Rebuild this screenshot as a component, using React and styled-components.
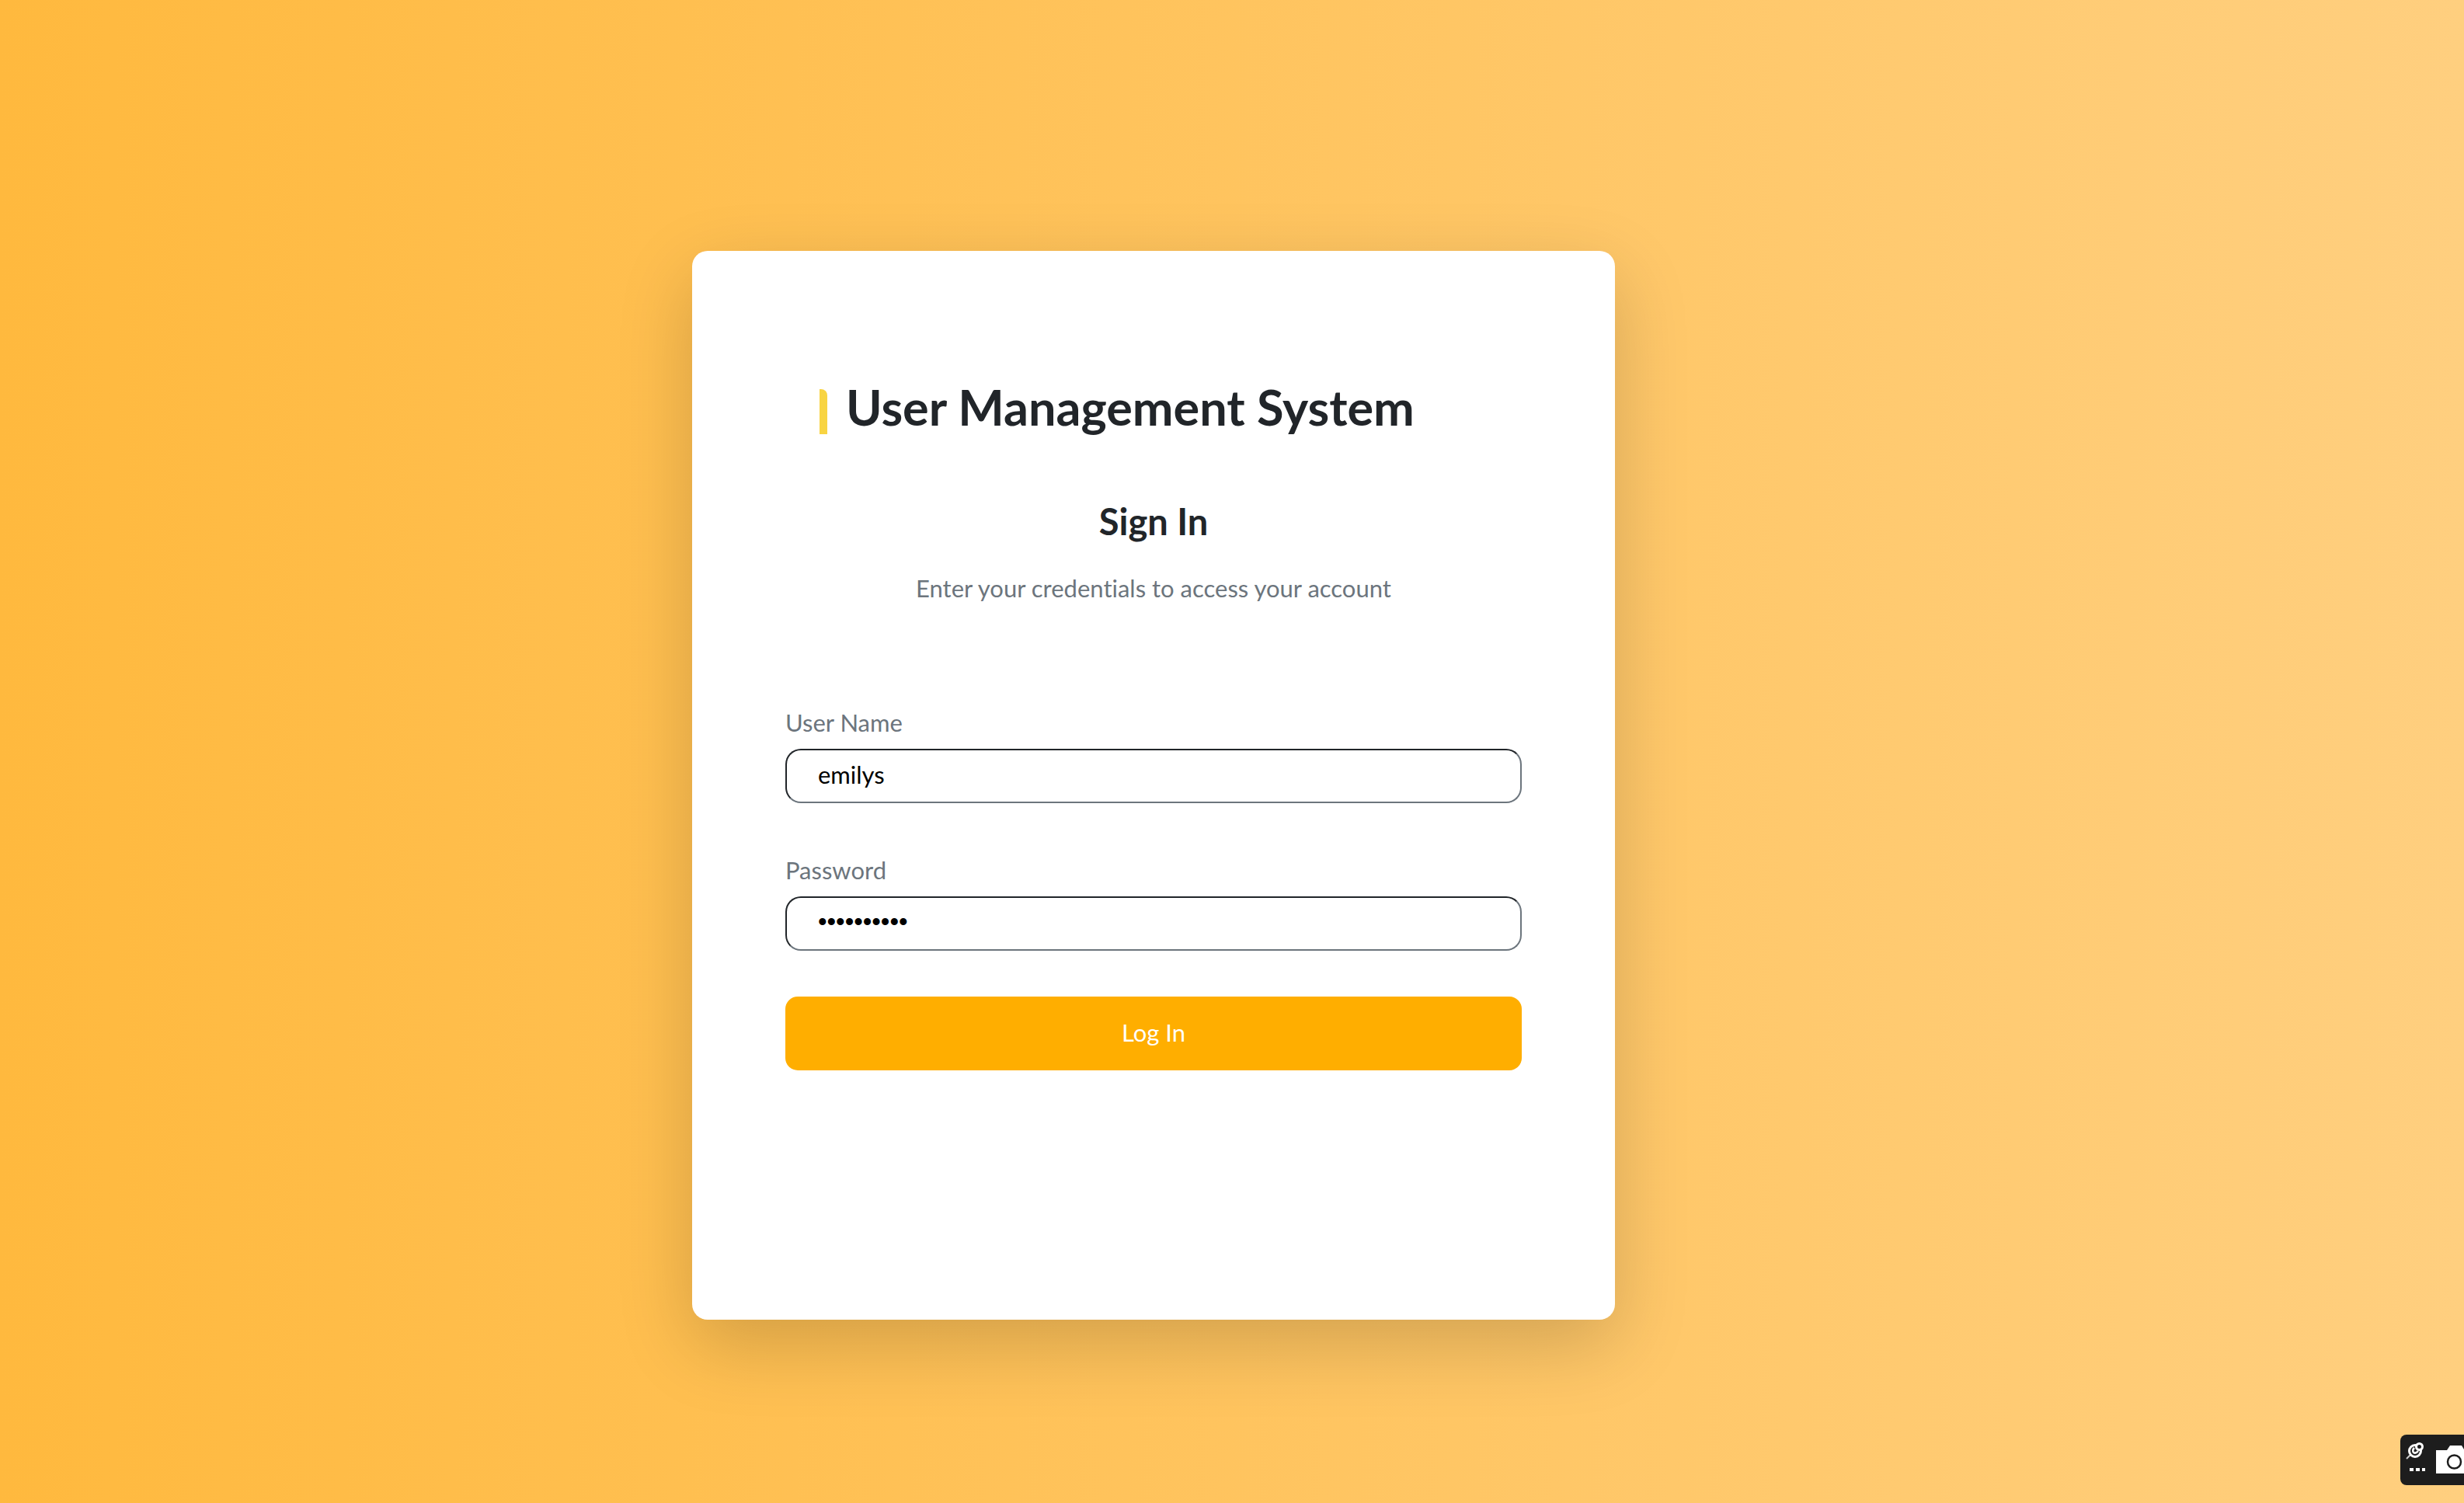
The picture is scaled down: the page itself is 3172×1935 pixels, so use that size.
import React, { useState } from "react";
import styled, { createGlobalStyle } from "styled-components";

const GlobalStyle = createGlobalStyle`
  *, *::before, *::after { box-sizing: border-box; }
  body {
    margin: 0;
    font-family: Lato, "Open Sans", sans-serif;
    font-variant-ligatures: none;
  }
  h1, h2, p { margin: 0; }
`;

const Page = styled.main`
  display: flex;
  align-items: flex-start;
  justify-content: center;
  min-height: 100vh;
  padding: 323px 202px 120px 0;
  background: linear-gradient(90deg, #ffb93e, #ffcf7f);
`;

const Card = styled.section`
  width: 40%;
  min-width: 1188px;
  padding: 164px 120px 321px;
  border-radius: 20px;
  background: #fff;
  box-shadow: 0 32px 96px rgba(0, 0, 0, 0.175);
`;

const Brand = styled.h1`
  display: flex;
  align-items: center;
  gap: 24px;
  padding-left: 44px;
  color: #212529;
  font-size: 63px;
  font-weight: 700;
  line-height: 74px;

  &::before {
    content: "";
    width: 10px;
    height: 58px;
    margin-top: 12px;
    border-top-right-radius: 8px;
    background: #f8d442;
  }
`;

const Intro = styled.header`
  display: flex;
  flex-direction: column;
  gap: 40px;
  margin: 82px 0 137px;
  text-align: center;
`;

const Heading = styled.h2`
  color: #212529;
  font-size: 47px;
  font-weight: 700;
  line-height: 56px;
`;

const Hint = styled.p`
  color: #6c757d;
  font-size: 31px;
  line-height: 36px;
`;

const Form = styled.form`
  display: flex;
  flex-direction: column;
`;

const Field = styled.div`
  display: flex;
  flex-direction: column;
  gap: 16px;
  margin-bottom: ${(p) => (p.$last ? 59 : 68)}px;
`;

const Label = styled.label`
  color: #6c757d;
  font-size: 31px;
  line-height: 36px;
`;

const Input = styled.input`
  width: 100%;
  height: 70px;
  padding: 0 40px 4px;
  border: 2px solid;
  border-color: #212529 #6c757d #6c757d #212529;
  border-radius: 20px;
  outline: none;
  background: #fff;
  color: #000;
  font-family: ${(p) =>
    p.type === "password" ? '"Liberation Sans", sans-serif' : 'Lato, sans-serif'};
  font-size: ${(p) => (p.type === "password" ? 33 : 31)}px;
`;

const Submit = styled.button`
  height: 95px;
  padding: 0 0 4px;
  border: 0;
  border-radius: 16px;
  background: #ffae00;
  color: #fff;
  font: 400 31px/36px Lato, sans-serif;
  cursor: pointer;
`;

const CaptureTool = styled.button`
  position: fixed;
  right: 0;
  bottom: 23px;
  width: 82px;
  height: 65px;
  padding: 0;
  border: 0;
  border-radius: 8px 0 0 8px;
  background: #1d1d1d;

  svg { display: block; }
`;

function CaptureIcon() {
  return (
    <svg width="82" height="65" viewBox="0 0 82 65" fill="none" aria-hidden="true">
      <path d="M8 31L13 26" stroke="#ccc" strokeWidth="2" />
      <circle cx="19" cy="21" r="7.5" stroke="#fff" strokeWidth="3" />
      <circle cx="24.5" cy="15.5" r="4" fill="#1d1d1d" stroke="#fff" strokeWidth="3" />
      <path d="M18 17Q15 20 17 23Q20 25 23 21" stroke="#fff" strokeWidth="2.5" />
      <path d="M12 43h5v4h-5zM20 43h5v4h-5zM28 43h4v4h-4z" fill="#fff" />
      <path d="M46 20h14l4-6h15l3 5v31H46z" fill="#fff" />
      <circle cx="69.5" cy="35" r="8.5" fill="#fff" stroke="#1d1d1d" strokeWidth="2.5" />
    </svg>
  );
}

export default function App() {
  const [name, setName] = useState("emilys");
  const [password, setPassword] = useState("emilyspass");

  return (
    <>
      <GlobalStyle />
      <Page>
        <Card>
          <Brand>User Management System</Brand>
          <Intro>
            <Heading>Sign In</Heading>
            <Hint>Enter your credentials to access your account</Hint>
          </Intro>
          <Form onSubmit={(e) => e.preventDefault()}>
            <Field>
              <Label htmlFor="username">User Name</Label>
              <Input
                id="username"
                type="text"
                value={name}
                onChange={(e) => setName(e.target.value)}
              />
            </Field>
            <Field $last>
              <Label htmlFor="password">Password</Label>
              <Input
                id="password"
                type="password"
                value={password}
                onChange={(e) => setPassword(e.target.value)}
              />
            </Field>
            <Submit type="submit">Log In</Submit>
          </Form>
        </Card>
      </Page>
      <CaptureTool type="button" aria-label="Capture">
        <CaptureIcon />
      </CaptureTool>
    </>
  );
}
